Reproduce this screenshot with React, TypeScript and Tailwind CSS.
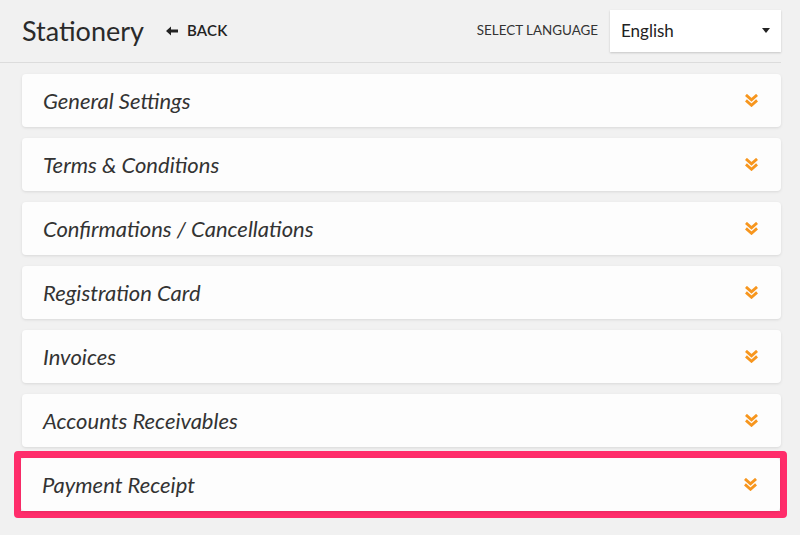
import React from 'react';

const sections = [
  'General Settings',
  'Terms & Conditions',
  'Confirmations / Cancellations',
  'Registration Card',
  'Invoices',
  'Accounts Receivables',
];

function DoubleChevron() {
  return (
    <svg width="13" height="13" viewBox="0 0 13 13" fill="none" stroke="#f7961e" strokeWidth="2.8" strokeLinecap="square">
      <path d="M2 1.8l4.5 4 4.5-4" />
      <path d="M2 7.3l4.5 4 4.5-4" />
    </svg>
  );
}

function Card({ title }: { title: string }) {
  return (
    <div className="h-[53px] bg-[#fdfdfd] rounded-[4px] shadow-[0_1px_3px_rgba(0,0,0,0.1)] flex items-center justify-between pl-[21px] pr-[23px]">
      <span className="text-[22px] italic text-[#333]">{title}</span>
      <DoubleChevron />
    </div>
  );
}

export default function App() {
  return (
    <div
      className="w-[800px] h-[535px] overflow-hidden bg-[#f1f1f1] text-[#222]"
      style={{ fontFamily: 'Lato, "Open Sans", sans-serif' }}
    >
      <div className="flex items-center h-[62px] pl-[22px] pr-[19px] pb-[1px]">
        <h1 className="text-[27px] leading-none text-[#2a2a2a]">Stationery</h1>
        <button className="ml-[22px] flex items-center gap-[9px] text-[15px] font-semibold tracking-[0.2px] text-[#222]">
          <svg width="12" height="10" viewBox="0 0 12 10" fill="#222">
            <path d="M0 5l5-4.5v3h7v3H5v3z" />
          </svg>
          BACK
        </button>
        <div className="ml-auto flex items-center">
          <span className="text-[13.4px] text-[#333] mr-[12px]">SELECT LANGUAGE</span>
          <div className="w-[171px] h-[42px] bg-white shadow-[0_1px_2px_rgba(0,0,0,0.18)] flex items-center justify-between pl-[11px] pr-[11px]">
            <span className="text-[17px] text-[#222]">English</span>
            <svg width="8" height="5" viewBox="0 0 8 5" fill="#222">
              <path d="M0 0h8L4 5z" />
            </svg>
          </div>
        </div>
      </div>
      <div className="h-px bg-[#dcdcdc] mr-[19px]" />
      <div className="flex flex-col gap-[11px] pt-[11px] pl-[22px] pr-[19px]">
        {sections.map((s) => (
          <Card key={s} title={s} />
        ))}
        <div className="-ml-[8px] -mr-[6px] -my-[7px] border-[7px] border-[#ff2d6b] rounded-[4px]">
          <Card title="Payment Receipt" />
        </div>
      </div>
    </div>
  );
}
